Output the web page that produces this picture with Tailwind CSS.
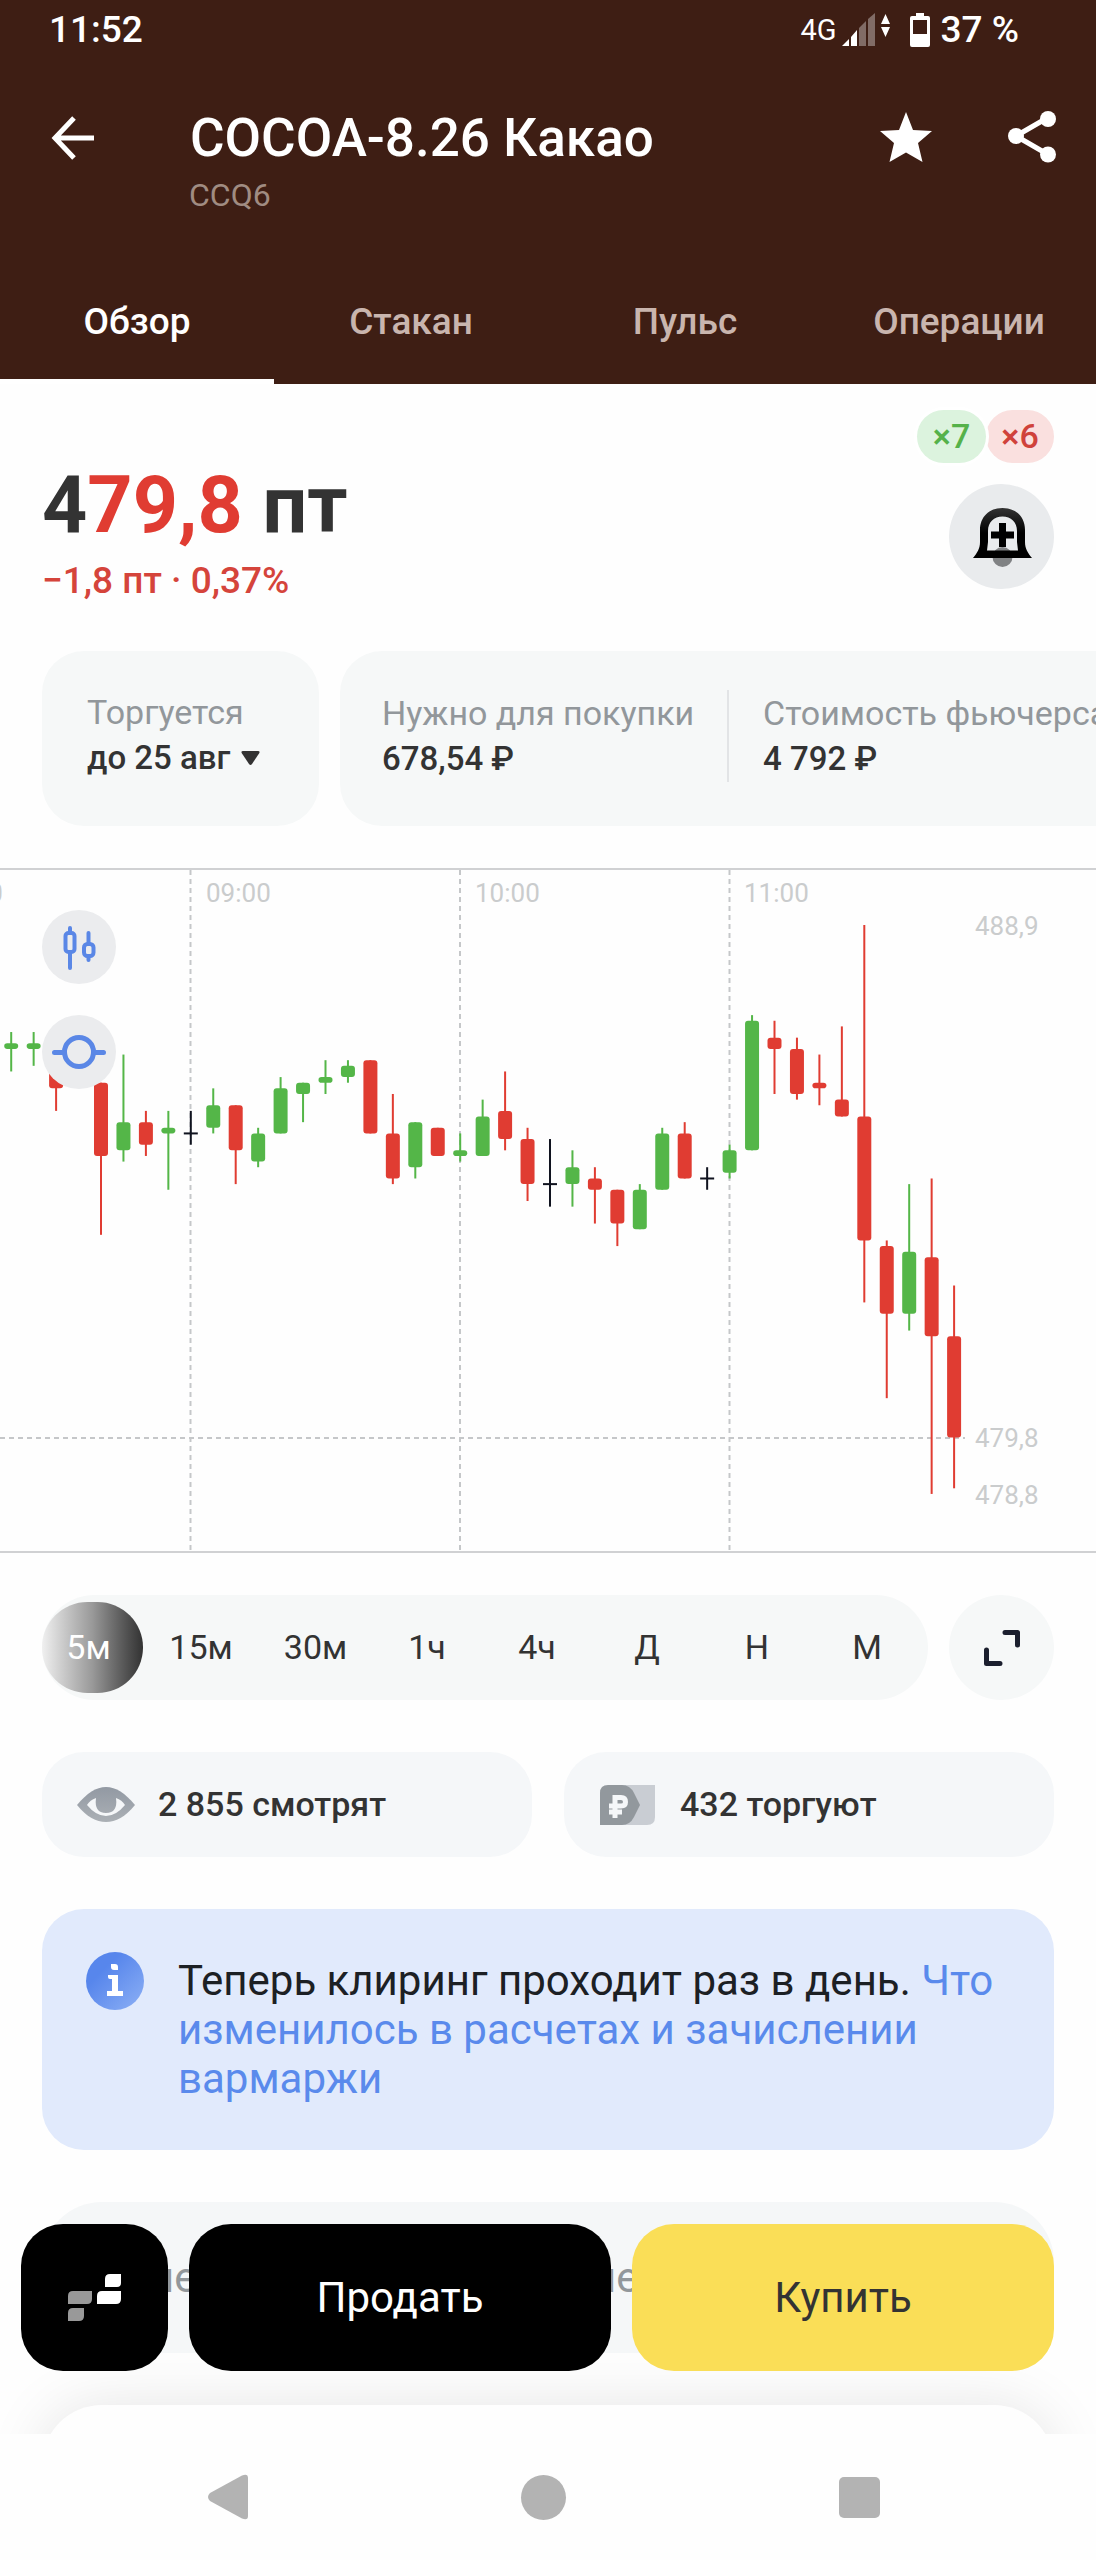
<!DOCTYPE html>
<html lang="ru">
<head>
    <meta charset="UTF-8">
    <meta name="viewport" content="width=device-width, initial-scale=1.0">
    <title>COCOA-8.26 Какао</title>
    <script src="https://cdn.jsdelivr.net/npm/@tailwindcss/browser@4"></script>
</head>
<body class="bg-[#fefefe] font-['Roboto',sans-serif] text-[#333333]">
<div class="flex flex-col h-screen overflow-hidden">

    <header class="bg-[#3e1e14] text-white">
        <!-- Status bar -->
        <div class="flex items-center justify-between h-[60px] pl-[49px] pr-[77px] font-medium text-[37px] leading-[44px]">
            <span>11:52</span>
            <div class="flex items-center">
                <span class="font-normal text-[29px]">4G</span>
                <svg class="w-[50px] h-[36px] ml-[5px]" viewBox="0 0 50 36" fill="#fff">
                    <path d="M0 34 L7 27 V34 Z"/>
                    <path d="M9 25 L15 18 V34 H9 Z"/>
                    <path d="M17 16 L24 9 V34 H17 Z" opacity=".35"/>
                    <path d="M26 7 L33 1 V34 H26 Z" opacity=".35"/>
                    <path d="M39 12 L43.5 2 L48 12 Z M39 15 H48 L43.5 25 Z"/>
                </svg>
                <svg class="w-[20px] h-[36px] ml-[18px] mr-[11px]" viewBox="0 0 20 36" fill="#fff">
                    <path fill-rule="evenodd" d="M6 1 H14 V4 H18 Q20 4 20 6 V33 Q20 35 18 35 H2 Q0 35 0 33 V6 Q0 4 2 4 H6 Z M3 8 V22 H17 V8 Z"/>
                </svg>
                <span>37 %</span>
            </div>
        </div>

        <!-- Title -->
        <div class="flex items-center h-[100px] mt-[28px] pl-[51px] pr-[38px]">
            <button type="button" aria-label="Назад">
                <svg class="w-[44px] h-[44px]" viewBox="0 0 44 44" fill="none" stroke="#fff" stroke-width="5">
                    <path d="M43 22 H5 M23 2 L4 22 L23 42"/>
                </svg>
            </button>
            <h1 class="ml-[95px] font-medium text-[53px] leading-[64px]">COCOA-8.26 Какао</h1>
            <button type="button" aria-label="В избранное" class="ml-auto">
                <svg class="w-[54px] h-[54px]" viewBox="0 0 54 54" fill="#fff">
                    <path d="M27 1 L34 19 L53 20 L39 32 L43.500 51 L27 41.500 L10.500 51 L15 32 L1 20 L20 19 Z"/>
                </svg>
            </button>
            <button type="button" aria-label="Поделиться" class="ml-[73px]">
                <svg class="w-[52px] h-[54px]" viewBox="0 0 52 54" fill="#fff">
                    <path d="M10 25 L42 6.500 M10 25 L42 43.500" stroke="#fff" stroke-width="5"/>
                    <circle cx="10" cy="25" r="8"/>
                    <circle cx="42" cy="8" r="8"/>
                    <circle cx="42" cy="43.500" r="8"/>
                </svg>
            </button>
        </div>
        <p class="ml-[189px] text-[32px] leading-[38px] text-[#a08c82] -mt-3">CCQ6</p>

        <!-- Tabs -->
        <nav class="grid grid-cols-4 mt-[46px] h-[124px] font-medium text-[37px] text-[#c9b5ae] text-center">
            <a href="#" class="flex items-center justify-center pt-[5px] border-b-[5px] border-white text-white">Обзор</a>
            <a href="#" class="flex items-center justify-center pt-[5px] border-b-[5px] border-transparent">Стакан</a>
            <a href="#" class="flex items-center justify-center pt-[5px] border-b-[5px] border-transparent">Пульс</a>
            <a href="#" class="flex items-center justify-center pt-[5px] border-b-[5px] border-transparent">Операции</a>
        </nav>
    </header>

    <main class="relative flex-1 min-h-0 overflow-hidden">

        <!-- Price -->
        <section class="flex justify-between px-[42px] pt-[26px]">
            <div class="pt-[48px]">
                <p class="font-bold text-[79px] leading-[94px]">4<span class="text-[#e03c32]">79,8</span> пт</p>
                <p class="mt-[7px] font-medium text-[37px] leading-[44px] text-[#d5443b]">−1,8 пт · 0,37%</p>
            </div>
            <div class="flex flex-col items-end">
                <div class="flex font-medium text-[34px] leading-[53px] text-center">
                    <span class="relative w-[69px] rounded-full bg-[#dcf3de] text-[#55b24a] ring-3 ring-white">×7</span>
                    <span class="w-[68px] rounded-full bg-[#fae0df] text-[#d0423b]">×6</span>
                </div>
                <button type="button" aria-label="Создать уведомление" class="mt-[21px] size-[105px] rounded-full bg-[#e9ebed] flex items-center justify-center">
                    <svg class="size-[62px]" viewBox="0 0 62 62">
                        <defs>
                            <linearGradient id="bell" x1="0" y1="0" x2="0" y2="1">
                                <stop offset="0" stop-color="#333"/>
                                <stop offset=".5" stop-color="#000"/>
                            </linearGradient>
                        </defs>
                        <circle cx="31.500" cy="51" r="10" fill="#808284"/>
                        <path fill="url(#bell)" fill-rule="evenodd" d="M31.500 2 C18 2 9 11 9 24 V36 C9 43 6 47 2 52 H61 C57 47 54 43 54 36 V24 C54 11 45 2 31.500 2 Z M31.500 10.500 C40 10.500 46 16 46 25 V36 L47 44.500 H16 L17 36 V25 C17 16 23 10.500 31.500 10.500 Z"/>
                        <path fill="#000" d="M28 17 H35 V25.500 H43 V32.500 H35 V41 H28 V32.500 H20 V25.500 H28 Z"/>
                    </svg>
                </button>
            </div>
        </section>

        <!-- Details -->
        <section class="flex gap-[21px] mt-[48px] pl-[42px] h-[175px] text-[34px] leading-[46px] whitespace-nowrap overflow-hidden">
            <div class="shrink-0 w-[277px] px-[45px] py-[38px] rounded-[42px] bg-[#f6f8f8]">
                <p class="text-[#92979b]">Торгуется</p>
                <button type="button" class="flex items-center gap-[11px] font-medium text-[33px]">до 25 авг
                    <svg class="w-[19px] h-[16px]" viewBox="0 0 19 16" fill="#333"><path d="M2 1 H17 Q19.500 1 18 3.500 L11 14 Q9.500 16 8 14 L1 3.500 Q-.5 1 2 1 Z"/></svg>
                </button>
            </div>
            <div class="shrink-0 flex items-start w-[900px] pl-[42px] pt-[39px] rounded-[42px] bg-[#f6f8f8]">
                <div class="w-[345px]">
                    <p class="text-[#92979b]">Нужно для покупки</p>
                    <p class="font-medium text-[33px]">678,54 ₽</p>
                </div>
                <div class="border-l-2 border-[#e2e4e6] pl-[34px]">
                    <p class="text-[#92979b]">Стоимость фьючерса</p>
                    <p class="font-medium text-[33px]">4 792 ₽</p>
                </div>
            </div>
        </section>

        <!-- Chart -->
        <section class="relative mt-[42px] border-y-2 border-[#d0d1d3]">
            <svg id="chart" class="block w-full h-auto font-['Roboto',sans-serif] text-[26px]" viewBox="0 0 1096 681" fill="#cacccd">
                <g stroke="#c5c7c9" stroke-width="2" stroke-dasharray="5 4">
                    <path d="M190.500 0 V681 M460 0 V681 M729.500 0 V681 M0 568 H965"/>
                </g>
                <text x="-62" y="32">08:00</text>
                <text x="206" y="32">09:00</text>
                <text x="475" y="32">10:00</text>
                <text x="744" y="32">11:00</text>
                <text x="975" y="65">488,9</text>
                <text x="975" y="577">479,8</text>
                <text x="975" y="634">478,8</text>
            </svg>
            <div class="absolute left-[42px] top-[40px] flex flex-col gap-[31px]">
                <button type="button" aria-label="Тип графика" class="size-[74px] rounded-full bg-[#ebecee] flex items-center justify-center">
                    <svg class="size-[46px]" viewBox="0 0 46 46" fill="none" stroke="#5a87e6" stroke-width="4" stroke-linecap="round">
                        <path d="M14 4 V9 M14 29 V44 M32.500 9 V20 M32.500 34 V36"/>
                        <rect x="9.500" y="9" width="9" height="19" rx="3"/>
                        <rect x="28" y="20" width="9.500" height="12" rx="3.500"/>
                    </svg>
                </button>
                <button type="button" aria-label="Индикаторы" class="size-[74px] rounded-full bg-[#ebecee] flex items-center justify-center">
                    <svg class="w-[54px] h-[36px]" viewBox="0 0 54 36" fill="none" stroke="#5a87e6" stroke-width="5">
                        <circle cx="27" cy="18" r="14.500"/>
                        <path d="M2.500 18.500 H12 M42 18.500 H51.500" stroke-linecap="round"/>
                    </svg>
                </button>
            </div>
        </section>

        <!-- Intervals -->
        <section class="flex gap-[21px] px-[42px] mt-[42px] text-[34px]">
            <div class="flex-1 flex items-center h-[105px] pr-[6px] rounded-full bg-[#f6f8f8]">
                <button type="button" class="w-[101px] h-[91px] pr-2 rounded-full bg-linear-to-r from-[#f0f0f0] via-[#999999] to-[#333333] text-white">5м</button>
                <button type="button" class="w-[116px]">15м</button>
                <button type="button" class="w-[113px]">30м</button>
                <button type="button" class="flex-1">1ч</button>
                <button type="button" class="flex-1">4ч</button>
                <button type="button" class="flex-1">Д</button>
                <button type="button" class="flex-1">Н</button>
                <button type="button" class="flex-1">М</button>
            </div>
            <button type="button" aria-label="На весь экран" class="size-[105px] rounded-full bg-[#f6f8f8] flex items-center justify-center">
                <svg class="size-[40px]" viewBox="0 0 40 40" fill="none" stroke="#1b1f2e" stroke-width="5" stroke-linecap="round" stroke-linejoin="round">
                    <path d="M23 4.500 H35.500 V17 M4.500 22 V35.500 H18"/>
                </svg>
            </button>
        </section>

        <!-- Activity -->
        <section class="grid grid-cols-2 gap-[32px] px-[42px] mt-[52px] font-medium text-[34px]">
            <div class="flex items-center h-[105px] pl-[35px] rounded-[42px] bg-[#f5f7f9]">
                <svg class="w-[58px] h-[36px] mr-[23px]" viewBox="0 0 58 36">
                    <defs>
                        <linearGradient id="eye" x1="0" y1="0" x2="0" y2="1">
                            <stop offset="0" stop-color="#9299a3"/>
                            <stop offset="1" stop-color="#abb0b5"/>
                        </linearGradient>
                    </defs>
                    <path fill="url(#eye)" d="M0 18 C10 6 19 0 29 0 C39 0 48 6 58 18 C48 30 39 35 29 35 C19 35 10 30 0 18 Z"/>
                    <path fill="#f5f7f9" d="M10 18 Q13 13 19 11 Q17 26 29 26 Q41 26 39 11 Q45 13 48 18 Q39 29 29 29 Q19 29 10 18 Z"/>
                </svg>
                2 855 смотрят
            </div>
            <div class="flex items-center h-[105px] pl-[36px] rounded-[42px] bg-[#f5f7f9]">
                <svg class="w-[55px] h-[40px] mr-[25px]" viewBox="0 0 55 40">
                    <path fill="#c9cdd3" d="M20 0 H55 V32 Q55 40 47 40 H20 Z"/>
                    <path fill="#92989d" d="M8 0 H22 Q30 0 34 8 L40 20 L34 32 Q30 40 22 40 H0 V8 Q0 0 8 0 Z"/>
                    <path fill="none" stroke="#f5f7f9" stroke-width="5" d="M15 33 V12.500 H21 Q25.500 12.500 25.500 17 Q25.500 21 21 21 H9 M9 27 H22"/>
                </svg>
                432 торгуют
            </div>
        </section>

        <!-- Notice -->
        <section class="flex items-start mx-[42px] mt-[52px] pl-[44px] pr-[44px] py-[43px] rounded-[42px] bg-[#e1eafc]">
            <svg class="shrink-0 size-[58px]" viewBox="0 0 58 58">
                <defs>
                    <linearGradient id="info" x1="0" y1="0" x2="1" y2="1">
                        <stop offset=".3" stop-color="#5786ec"/>
                        <stop offset="1" stop-color="#8db0f5"/>
                    </linearGradient>
                </defs>
                <circle cx="29" cy="29" r="29" fill="url(#info)"/>
                <path fill="#fff" d="M25 12 H29 Q32 12 32 15 V18 H28 Q25 18 25 15 Z M22 23 H32 V39 H37 V44 H21 V39 H26 V27 H24 Q22 27 22 25 Z"/>
            </svg>
            <p class="ml-[34px] pt-[4px] pb-[4px] text-[42px] leading-[49px] text-[#1c2024]">Теперь клиринг проходит раз в день. <a href="#" class="text-[#5a8aec]">Что изменилось в расчетах и зачислении вармаржи</a></p>
        </section>

        <!-- Next cards -->
        <section class="grid grid-cols-2 mx-[42px] mt-[52px] h-[151px] pt-[51px] rounded-[60px] bg-[#f5f7f8] text-[42px] leading-[49px] text-[#92979b]">
            <span class="pl-[108px]">не</span>
            <span class="pl-[44px]">не</span>
        </section>
        <section class="mx-[42px] mt-[52px] h-[200px] rounded-[60px] bg-[#fefefe] shadow-[0_0_60px_rgba(0,0,0,0.10)]"></section>

        <!-- Actions -->
        <div class="absolute inset-x-0 bottom-[63px] flex gap-[21px] pl-[21px] pr-[42px] h-[147px] text-[42px]">
            <button type="button" aria-label="Терминал" class="shrink-0 w-[147px] rounded-[42px] bg-black flex items-center justify-center">
                <svg class="w-[54px] h-[48px]" viewBox="0 0 54 48">
                    <path fill="#fff" d="M42 0 H53 V9 Q53 13 49 13 H37 V5 Q37 0 42 0 Z M34 17 H53 V25 Q53 30 48 30 H29 V22 Q29 17 34 17 Z"/>
                    <path fill="#999" d="M5 17 H24 V25 Q24 30 19 30 H0 V22 Q0 17 5 17 Z M5 34 H16 V42 Q16 47 11 47 H0 V39 Q0 34 5 34 Z"/>
                </svg>
            </button>
            <button type="button" class="flex-1 rounded-[42px] bg-black text-white">Продать</button>
            <button type="button" class="flex-1 rounded-[42px] bg-[#fade57]">Купить</button>
        </div>
    </main>

    <!-- System navigation -->
    <nav class="relative flex items-center justify-between h-[126px] pl-[208px] pr-[216px] bg-[#fefefe]">
        <button type="button" aria-label="Назад">
            <svg class="w-[40px] h-[46px]" viewBox="0 0 40 46" fill="#b3b3b3"><path d="M2 19 L34 1.500 Q40 -1 40 4 V42 Q40 47 34 44.500 L2 27 Q-2 23 2 19 Z"/></svg>
        </button>
        <button type="button" aria-label="Домой" class="size-[45px] rounded-full bg-[#b3b3b3]"></button>
        <button type="button" aria-label="Недавние" class="size-[41px] rounded-[5px] bg-[#b3b3b3]"></button>
    </nav>
</div>

<script>
    // [high, body top, body bottom, low, color], in ticks of 0,1 below 488,9
    const candles = [
        [19, 21, 22, 26, 'g'], [19, 21, 22, 25, 'g'], [22, 23, 29, 33, 'r'], [23, 24, 27, 28, 'g'],
        [28, 28, 41, 55, 'r'], [23, 35, 40, 42, 'g'], [33, 35, 39, 41, 'r'], [33, 36, 37, 47, 'g'],
        [33, 37, 37, 39, 'b'], [29, 32, 36, 37, 'g'], [32, 32, 40, 46, 'r'], [36, 37, 42, 43, 'g'],
        [27, 29, 37, 37, 'g'], [28, 28, 30, 35, 'g'], [24, 27, 28, 30, 'g'], [24, 25, 27, 28, 'g'],
        [24, 24, 37, 37, 'r'], [30, 37, 45, 46, 'r'], [35, 35, 43, 45, 'g'], [36, 36, 41, 41, 'r'],
        [37, 40, 41, 42, 'g'], [31, 34, 41, 41, 'g'], [26, 33, 38, 40, 'r'], [36, 38, 46, 49, 'r'],
        [38, 46, 46, 50, 'b'], [40, 43, 46, 50, 'g'], [43, 45, 47, 53, 'r'], [47, 47, 53, 57, 'r'],
        [46, 47, 54, 54, 'g'], [36, 37, 47, 47, 'g'], [35, 37, 45, 45, 'r'], [43, 45, 45, 47, 'b'],
        [39, 40, 44, 45, 'g'], [16, 17, 40, 40, 'g'], [17, 20, 22, 30, 'r'], [20, 22, 30, 31, 'r'],
        [23, 28, 29, 32, 'r'], [18, 31, 34, 34, 'r'], [0, 34, 56, 67, 'r'], [56, 57, 69, 84, 'r'],
        [46, 58, 69, 72, 'g'], [45, 59, 73, 101, 'r'], [64, 73, 91, 100, 'r']
    ];
    const colors = { g: '#54b648', r: '#e03c32', b: '#10131f' };
    const svg = document.getElementById('chart');
    const y = (tick) => 55 + tick * 5.633;

    function rect(x, top, width, height, radius, fill) {
        const el = document.createElementNS('http://www.w3.org/2000/svg', 'rect');
        const attrs = { x: x, y: top, width: width, height: height, rx: radius, fill: fill };
        for (const name in attrs) el.setAttribute(name, attrs[name]);
        svg.appendChild(el);
    }

    candles.forEach(([high, top, bottom, low, color], i) => {
        const x = 11.2 + i * 22.45;
        rect(x - 1, y(high), 2, y(low) - y(high), 0, colors[color]);
        if (color === 'b') {
            rect(x - 7, y(top) - 1, 14, 2, 0, colors[color]);
        } else {
            rect(x - 7, y(top), 14, y(bottom) - y(top), 3, colors[color]);
        }
    });
</script>
</body>
</html>
